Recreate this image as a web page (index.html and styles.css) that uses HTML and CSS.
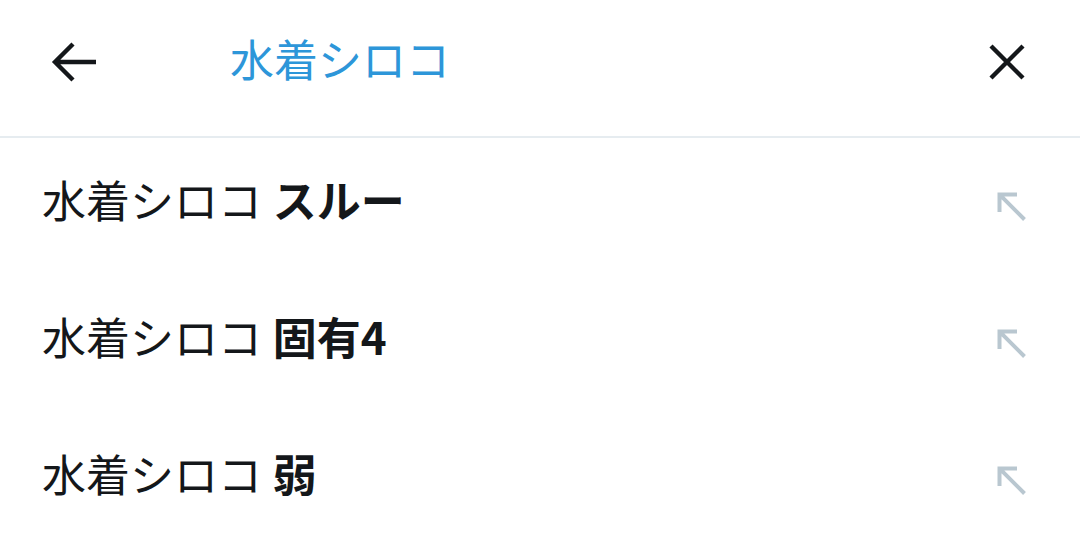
FILE: index.html
```html
<!DOCTYPE html>
<html lang="ja">
<head>
  <meta charset="UTF-8">
  <title>検索</title>
  <link rel="stylesheet" href="styles.css">
</head>
<body>
  <header class="search-bar">
    <button class="icon-btn back-btn" aria-label="戻る">
      <svg width="48" height="48" viewBox="0 0 24 24"><path d="M23 12H2.5M11.5 3l-9 9 9 9" fill="none" stroke="#14171a" stroke-width="2.2"/></svg>
    </button>
    <div class="query">水着シロコ</div>
    <button class="icon-btn close-btn" aria-label="クリア">
      <svg width="48" height="48" viewBox="0 0 24 24"><path d="M4 4l16 16M20 4L4 20" fill="none" stroke="#14171a" stroke-width="2.2"/></svg>
    </button>
  </header>

  <ul class="suggestions">
    <li class="suggestion">
      <span class="text">水着シロコ <b>スルー</b></span>
      <svg class="fill-arrow" width="40" height="40" viewBox="0 0 24 24"><path d="M19.5 19.5L5.5 5.5M4.5 15V4.5H15" fill="none" stroke="#b9c7d0" stroke-width="2.4"/></svg>
    </li>
    <li class="suggestion">
      <span class="text">水着シロコ <b>固有4</b></span>
      <svg class="fill-arrow" width="40" height="40" viewBox="0 0 24 24"><path d="M19.5 19.5L5.5 5.5M4.5 15V4.5H15" fill="none" stroke="#b9c7d0" stroke-width="2.4"/></svg>
    </li>
    <li class="suggestion">
      <span class="text">水着シロコ <b>弱</b></span>
      <svg class="fill-arrow" width="40" height="40" viewBox="0 0 24 24"><path d="M19.5 19.5L5.5 5.5M4.5 15V4.5H15" fill="none" stroke="#b9c7d0" stroke-width="2.4"/></svg>
    </li>
  </ul>
</body>
</html>
```

FILE: styles.css
```css
body {
  margin: 0;
  background-color: #fff;
  color: #14171a;
  font-family: "Noto Sans CJK JP", "Noto Sans", sans-serif;
}

.search-bar {
  display: flex;
  align-items: center;
  height: 124px;
  padding: 0 49px 12px 50px;
  border-bottom: 2px solid #e6ecf0;
}

.icon-btn {
  display: flex;
  align-items: center;
  justify-content: center;
  width: 48px;
  height: 48px;
  padding: 0;
  border: none;
  background: none;
}

.query {
  flex: 1;
  margin-left: 132px;
  padding-bottom: 8px;
  font-size: 44px;
  color: #2d96d9;
}

.suggestions {
  list-style: none;
  margin: 0;
  padding: 0;
}

.suggestion {
  display: flex;
  align-items: center;
  justify-content: space-between;
  height: 137px;
  padding: 0 48px 0 42px;
}

.text {
  padding-bottom: 16px;
  font-size: 44px;
}

.text b {
  font-weight: 700;
  margin-left: 1px;
}
```
